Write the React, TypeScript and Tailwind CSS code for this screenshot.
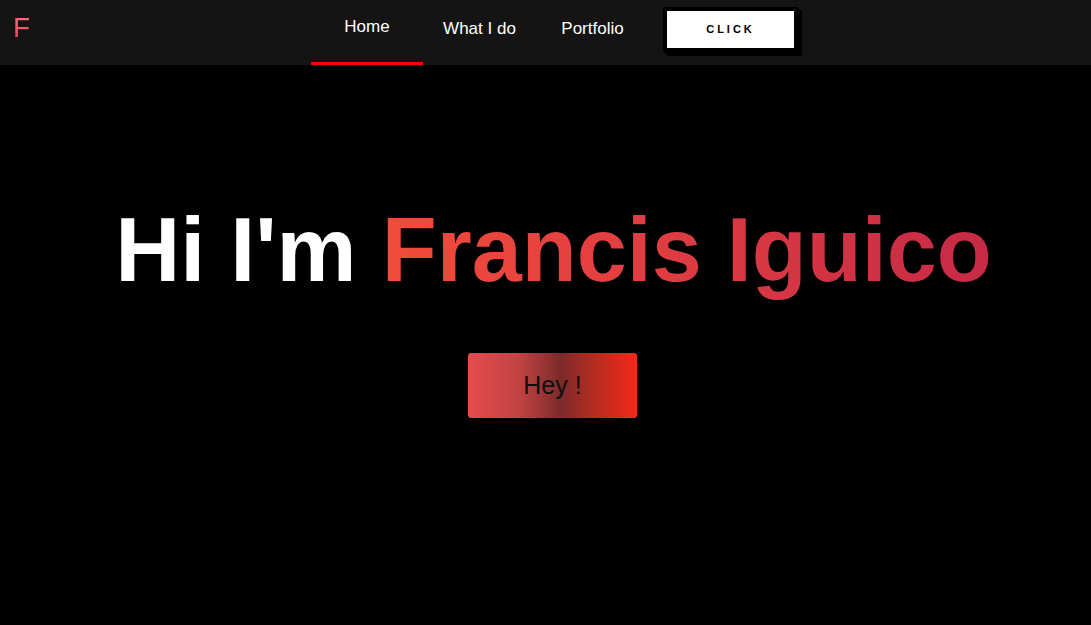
import React from "react";

const links = [
  { label: "Home", active: true },
  { label: "What I do", active: false },
  { label: "Portfolio", active: false },
];

function Navbar() {
  return (
    <nav className="flex h-[65px] items-stretch bg-[#141414]">
      <div className="w-[311px] pl-[13px] pt-[11px]">
        <span className="bg-gradient-to-b from-[#ff7585] to-[#e23e50] bg-clip-text text-[28px] leading-[34px] text-transparent">
          F
        </span>
      </div>
      <ul className="flex items-stretch">
        {links.map((link) => (
          <li
            key={link.label}
            className={
              link.active
                ? "flex w-[112px] justify-center border-b-[3px] border-[#ff0000] pt-[17px] text-[17px] leading-[20px] text-white"
                : "flex w-[113px] justify-center pt-[19px] text-[17px] leading-[20px] text-white"
            }
          >
            {link.label}
          </li>
        ))}
      </ul>
      <div className="ml-[14px] pt-[7px]">
        <button className="flex h-[45px] w-[135px] items-center justify-center border-4 border-black bg-white text-[11px] font-bold tracking-[3px] text-black shadow-[1px_1px_0_#000,2px_2px_0_#000,3px_3px_0_#000,4px_4px_0_#000]">
          CLICK
        </button>
      </div>
    </nav>
  );
}

export default function App() {
  return (
    <div className="h-[625px] w-full bg-black font-['Liberation_Sans',Arial,sans-serif]">
      <Navbar />
      <main className="flex flex-col items-center pt-[140px]">
        <h1 className="pl-[16px] text-[90px] font-bold leading-[90px] text-white">
          Hi I'm{" "}
          <span className="bg-gradient-to-r from-[#f34b3a] to-[#c62a46] bg-clip-text text-transparent">
            Francis Iguico
          </span>
        </h1>
        <button className="ml-[14px] mt-[58px] flex h-[65px] w-[169px] items-center justify-center rounded-[3px] bg-[linear-gradient(to_right,#e54b4b,#c24343_30%,#7c2a2a_55%,#a92c22_70%,#f5291a)] text-[25px] text-[#0f0f0f]">
          Hey !
        </button>
      </main>
    </div>
  );
}
